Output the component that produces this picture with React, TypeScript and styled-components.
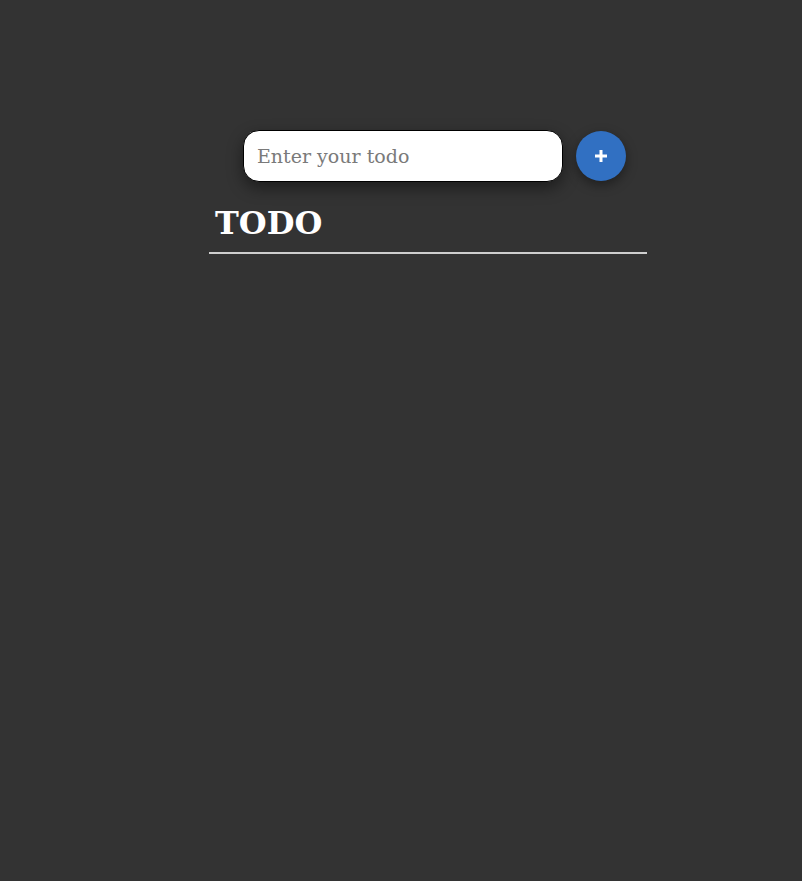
import React, {useState} from "react"
import styled, {createGlobalStyle} from "styled-components"

const GlobalStyle = createGlobalStyle`
body {
  margin: 0;
  background-color: #333333;
  font-family: "DejaVu Serif", "Liberation Serif", serif;
}
`

const Page = styled.div`
min-height: 881px;
padding-top: 130px;
padding-left: 209px;
box-sizing: border-box;
`

const Board = styled.div`
width: 438px;
display: flex;
flex-direction: column;
`

const Form = styled.form`
display: flex;
align-items: center;
gap: 13px;
padding-left: 34px;
`

const TodoInput = styled.input`
width: 320px;
height: 52px;
box-sizing: border-box;
border: 1px solid #000;
border-radius: 16px;
padding: 0 13px;
font-family: inherit;
font-size: 19px;
color: #333;
background: #fff;
box-shadow: 0 6px 16px rgba(0, 0, 0, 0.45);
outline: none;
&::placeholder {
  color: #7a7a7a;
}
`

const AddButton = styled.button`
width: 50px;
height: 50px;
border-radius: 50%;
border: none;
background-color: #3170c2;
color: #fff;
display: flex;
align-items: center;
justify-content: center;
box-shadow: 0 4px 12px rgba(0, 0, 0, 0.4);
cursor: pointer;
padding: 0;
`

const Title = styled.h1`
margin: 22px 0 0;
padding: 0 6px 10px;
font-size: 32px;
font-weight: bold;
color: #fff;
border-bottom: 2px solid #cfcfcf;
line-height: 1.2;
`

const App = () => {
  const [text, setText] = useState<string>("")
  return (
    <>
      <GlobalStyle />
      <Page>
        <Board>
          <Form onSubmit={e => { e.preventDefault(); setText("") }}>
            <TodoInput
              placeholder="Enter your todo"
              value={text}
              onChange={e => setText(e.target.value)}
            />
            <AddButton type="submit">
              <svg width="14" height="14" viewBox="0 0 14 14">
                <path d="M7 1v12M1 7h12" stroke="#fff" strokeWidth="3" />
              </svg>
            </AddButton>
          </Form>
          <Title>TODO</Title>
        </Board>
      </Page>
    </>
  )
}

export default App
